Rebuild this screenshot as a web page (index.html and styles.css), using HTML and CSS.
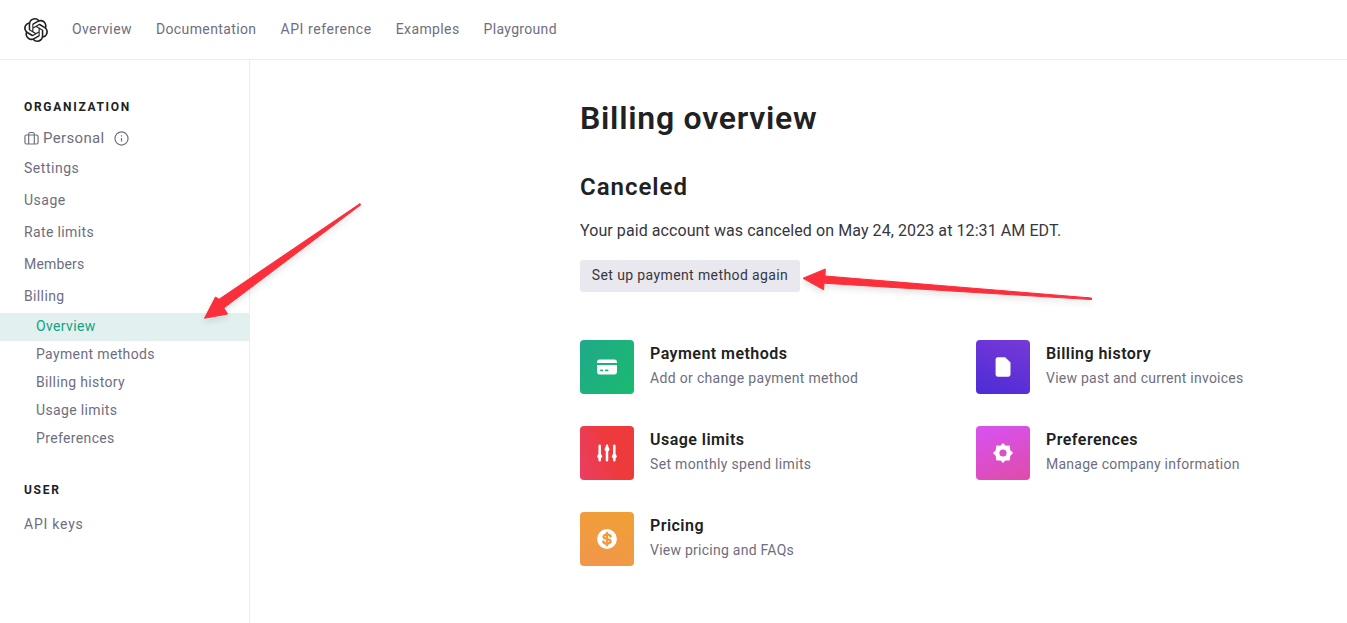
FILE: index.html
```html
<!DOCTYPE html>
<html lang="en">
<head>
<meta charset="utf-8">
<title>Billing overview</title>
<link rel="stylesheet" href="styles.css">
</head>
<body>
<header class="topbar">
  <svg class="logo" viewBox="0 0 24 24"><path d="M22.2819 9.8211a5.9847 5.9847 0 0 0-.5157-4.9108 6.0462 6.0462 0 0 0-6.5098-2.9A6.0651 6.0651 0 0 0 4.9807 4.1818a5.9847 5.9847 0 0 0-3.9977 2.9 6.0462 6.0462 0 0 0 .7427 7.0966 5.98 5.98 0 0 0 .511 4.9107 6.051 6.051 0 0 0 6.5146 2.9001A5.9847 5.9847 0 0 0 13.2599 24a6.0557 6.0557 0 0 0 5.7718-4.2058 5.9894 5.9894 0 0 0 3.9977-2.9001 6.0557 6.0557 0 0 0-.7475-7.0729zm-9.022 12.6081a4.4755 4.4755 0 0 1-2.8764-1.0408l.1419-.0804 4.7783-2.7582a.7948.7948 0 0 0 .3927-.6813v-6.7369l2.02 1.1686a.071.071 0 0 1 .038.052v5.5826a4.504 4.504 0 0 1-4.4945 4.4944zm-9.6607-4.1254a4.4708 4.4708 0 0 1-.5346-3.0137l.142.0852 4.783 2.7582a.7712.7712 0 0 0 .7806 0l5.8428-3.3685v2.3324a.0804.0804 0 0 1-.0332.0615L9.74 19.9502a4.4992 4.4992 0 0 1-6.1408-1.6464zM2.3408 7.8956a4.485 4.485 0 0 1 2.3655-1.9728V11.6a.7664.7664 0 0 0 .3879.6765l5.8144 3.3543-2.0201 1.1685a.0757.0757 0 0 1-.071 0l-4.8303-2.7865A4.504 4.504 0 0 1 2.3408 7.872zm16.5963 3.8558L13.1038 8.364 15.1192 7.2a.0757.0757 0 0 1 .071 0l4.8303 2.7913a4.4944 4.4944 0 0 1-.6765 8.1042v-5.6772a.79.79 0 0 0-.407-.667zm2.0107-3.0231l-.142-.0852-4.7735-2.7818a.7759.7759 0 0 0-.7854 0L9.409 9.2297V6.8974a.0662.0662 0 0 1 .0284-.0615l4.8303-2.7866a4.4992 4.4992 0 0 1 6.6802 4.66zM8.3065 12.863l-2.02-1.1638a.0804.0804 0 0 1-.038-.0567V6.0742a4.4992 4.4992 0 0 1 7.3757-3.4537l-.142.0805L8.704 5.459a.7948.7948 0 0 0-.3927.6813zm1.0976-2.3654l2.602-1.4998 2.6069 1.4998v2.9994l-2.5974 1.4997-2.6067-1.4997Z"/></svg>
  <nav class="topnav">
    <a>Overview</a><a>Documentation</a><a class="wide">API reference</a><a>Examples</a><a class="tight">Playground</a>
  </nav>
</header>
<div class="layout">
  <aside class="sidebar">
    <h3 class="side-title">ORGANIZATION</h3>
    <div class="org">
      <svg class="case" viewBox="0 0 16 16"><rect x="1" y="4.300" width="14" height="9.600" rx="1.600"/><path d="M5 13.900V3.200a1.600 1.600 0 0 1 1.600-1.600h2.800A1.600 1.600 0 0 1 11 3.200v10.700"/></svg>
      <span class="org-name">Personal</span>
      <svg class="info" viewBox="0 0 16 16"><circle cx="8" cy="8" r="7"/><path d="M8 7.400v3.700M8 4.600v1.300"/></svg>
    </div>
    <nav class="side-nav">
      <a class="loose">Settings</a><a class="loose">Usage</a><a>Rate limits</a><a class="snug">Members</a><a>Billing</a>
    </nav>
    <nav class="sub-nav">
      <a class="active">Overview</a><a>Payment methods</a><a>Billing history</a><a>Usage limits</a><a>Preferences</a>
    </nav>
    <h3 class="side-title user">USER</h3>
    <nav class="side-nav"><a class="keys">API keys</a></nav>
  </aside>
  <main class="content">
    <h1>Billing overview</h1>
    <h2>Canceled</h2>
    <p class="status">Your paid account was canceled on May 24, 2023 at 12:31 AM EDT.</p>
    <button class="setup">Set up payment method again</button>
    <div class="cards">
      <div class="card">
        <div class="tile green"><svg viewBox="0 0 20 20"><path d="M0 5a2.600 2.600 0 0 1 2.600-2.400h14.800A2.600 2.600 0 0 1 20 5v1H0zM0 8h20v7a2.600 2.600 0 0 1-2.600 2.500H2.600A2.600 2.600 0 0 1 0 15z"/><path class="cut" d="M4 13.400h1.200M8.800 13.400h1.700"/></svg></div>
        <div><h4>Payment methods</h4><p>Add or change payment method</p></div>
      </div>
      <div class="card">
        <div class="tile purple"><svg viewBox="0 0 20 20"><path d="M5 .2h7.200l5.300 5.300v11.900a2.400 2.400 0 0 1-2.400 2.400H5a2.400 2.400 0 0 1-2.400-2.400V2.600A2.400 2.400 0 0 1 5 .2z"/></svg></div>
        <div><h4>Billing history</h4><p class="snugger">View past and current invoices</p></div>
      </div>
      <div class="card">
        <div class="tile red"><svg viewBox="0 0 20 20"><path class="bars" d="M2.700 2.700v14.600M10 2.700v14.600M17.300 2.700v14.600"/><circle cx="2.700" cy="13.300" r="2.400"/><circle cx="10" cy="6.200" r="2.400"/><circle cx="17.300" cy="13.300" r="2.400"/></svg></div>
        <div><h4>Usage limits</h4><p>Set monthly spend limits</p></div>
      </div>
      <div class="card">
        <div class="tile pink"><svg viewBox="0 0 20 20"><path class="gear" fill-rule="evenodd" d="M10 .9L12.400 3.400 16.100 3.300 16.600 7.400 19.100 10 16.600 12.600 16.100 16.700 12.400 16.600 10 19.100 7.600 16.600 3.900 16.700 3.400 12.600 .9 10 3.400 7.400 3.900 3.300 7.600 3.400ZM10 5.700a4.300 4.300 0 1 0 0 8.600 4.300 4.300 0 0 0 0-8.600z"/></svg></div>
        <div><h4>Preferences</h4><p class="snugger">Manage company information</p></div>
      </div>
      <div class="card">
        <div class="tile orange"><svg viewBox="0 0 20 20"><circle cx="10" cy="10" r="9.900"/><path class="dollar" d="M13.700 7.500C13.200 6.100 11.800 5.500 10 5.500c-2.100 0-3.500.9-3.500 2.300C6.500 11 13.700 9.100 13.700 12.300c0 1.400-1.500 2.300-3.700 2.300-2 0-3.300-.7-3.800-2.100M10 3.800v12.500"/></svg></div>
        <div><h4>Pricing</h4><p class="snugger">View pricing and FAQs</p></div>
      </div>
    </div>
  </main>
</div>
<svg class="arrows" viewBox="0 0 1347 623">
  <path d="M360 203.600L219 299.300 215.500 297 204.500 318.200 227.600 314 223.800 308 360.500 205z"/>
  <path d="M1091.500 298L825 276 825.300 269 803 278.300 823.600 289.800 824 283.200 1091.500 299.600z"/>
</svg>
</body>
</html>
```
FILE: styles.css
```css
* { box-sizing: border-box; }
body {
  margin: 0;
  height: 623px;
  overflow: hidden;
  background: #fff;
  color: #202123;
  font-family: Roboto, "Liberation Sans", sans-serif;
  font-size: 14px;
  letter-spacing: .36px;
}
h1, h2, h3, h4, p { margin: 0; }

.topbar {
  display: flex;
  align-items: center;
  gap: 24px;
  height: 60px;
  padding: 0 24px;
  border-bottom: 1px solid #ececf1;
}
.logo { width: 24px; height: 24px; fill: #202123; }
.topnav { display: flex; gap: 24px; padding-bottom: 2px; color: #6e6e80; letter-spacing: .39px; }
.topnav .wide { letter-spacing: .56px; }
.topnav .tight { letter-spacing: .32px; }

.layout { display: flex; height: 563px; }
.sidebar {
  flex: none;
  width: 250px;
  padding-top: 37px;
  border-right: 1px solid #ececf1;
  color: #6e6e80;
}
.side-title {
  padding-left: 24px;
  color: #202123;
  font-size: 12px;
  font-weight: 700;
  line-height: 20px;
  letter-spacing: 1.7px;
}
.user { margin-top: 28px; margin-bottom: 10px; }
.org {
  display: flex;
  align-items: center;
  height: 32px;
  margin-top: 5px;
  padding-left: 24px;
}
.org svg { fill: none; stroke: #6e6e80; stroke-width: 1.25; }
.case, .info { width: 15px; height: 15px; }
.case { margin-right: 4px; }
.info { margin-left: 9px; }
.org-name { font-size: 15px; letter-spacing: .34px; }
.side-nav { display: flex; flex-direction: column; padding-left: 24px; line-height: 32px; margin-top: -2px; }
.side-nav .loose { letter-spacing: .52px; }
.side-nav .snug { letter-spacing: .16px; }
.side-nav .keys { letter-spacing: .78px; }
.sub-nav { display: flex; flex-direction: column; line-height: 26px; margin-top: 1px; }
.sub-nav a { padding: 0 0 2px 36px; }
.sub-nav .active { background: #e2f1f0; color: #10a37f; }
.sub-nav + .user { margin-top: 27px; }

.content { flex: 1; padding: 36px 0 0 330px; }
h1 { font-size: 32px; font-weight: 600; line-height: 44px; letter-spacing: .74px; }
h2 { margin-top: 31px; font-size: 24px; font-weight: 600; line-height: 32px; letter-spacing: .98px; }
.status { margin-top: 16px; color: #353740; font-size: 16px; line-height: 24px; letter-spacing: .08px; }
.setup {
  display: block;
  width: 220px;
  height: 32px;
  margin-top: 17px;
  padding: 0 0 2px;
  border: 0;
  border-radius: 3px;
  background: #e9e8ef;
  color: #353740;
  font: 400 14px Roboto, sans-serif;
  letter-spacing: .39px;
}
.cards {
  display: grid;
  grid-template-columns: 396px 396px;
  row-gap: 32px;
  margin-top: 48px;
}
.card { display: flex; gap: 16px; height: 54px; }
.card h4 { margin-top: 2px; font-size: 16px; font-weight: 600; line-height: 24px; letter-spacing: .46px; }
.card p { color: #6e6e80; line-height: 24px; letter-spacing: .33px; }
.card .snugger { letter-spacing: .25px; }
.tile {
  display: flex;
  align-items: center;
  justify-content: center;
  width: 54px;
  height: 54px;
  border-radius: 4px;
}
.tile svg { width: 20px; height: 20px; fill: #fff; }
.green { background: linear-gradient(125deg, #20a989, #1aba70); }
.purple { background: linear-gradient(20deg, #4c2cd5, #7739d8); }
.red { background: linear-gradient(70deg, #ea3e64, #ee3a3b 60%); }
.pink { background: linear-gradient(160deg, #d851e9 15%, #e04ba8); }
.orange { background: linear-gradient(20deg, #f0964c, #f0a035); }
.cut { fill: none; stroke: #1db37d; stroke-width: 1.9; stroke-linecap: round; }
.bars { fill: none; stroke: #fff; stroke-width: 2.5; stroke-linecap: round; }
.gear { stroke: #fff; stroke-width: 1.4; stroke-linejoin: round; }
.dollar { fill: none; stroke: #f09b41; stroke-width: 2.3; stroke-linecap: round; }

.arrows {
  position: absolute;
  top: 0;
  left: 0;
  width: 1347px;
  height: 623px;
  fill: #fb2f3b;
  stroke: #fb2f3b;
  stroke-width: 1;
  stroke-linejoin: round;
  pointer-events: none;
  filter: drop-shadow(0 3px 3px rgba(0, 0, 0, .12));
}
```
